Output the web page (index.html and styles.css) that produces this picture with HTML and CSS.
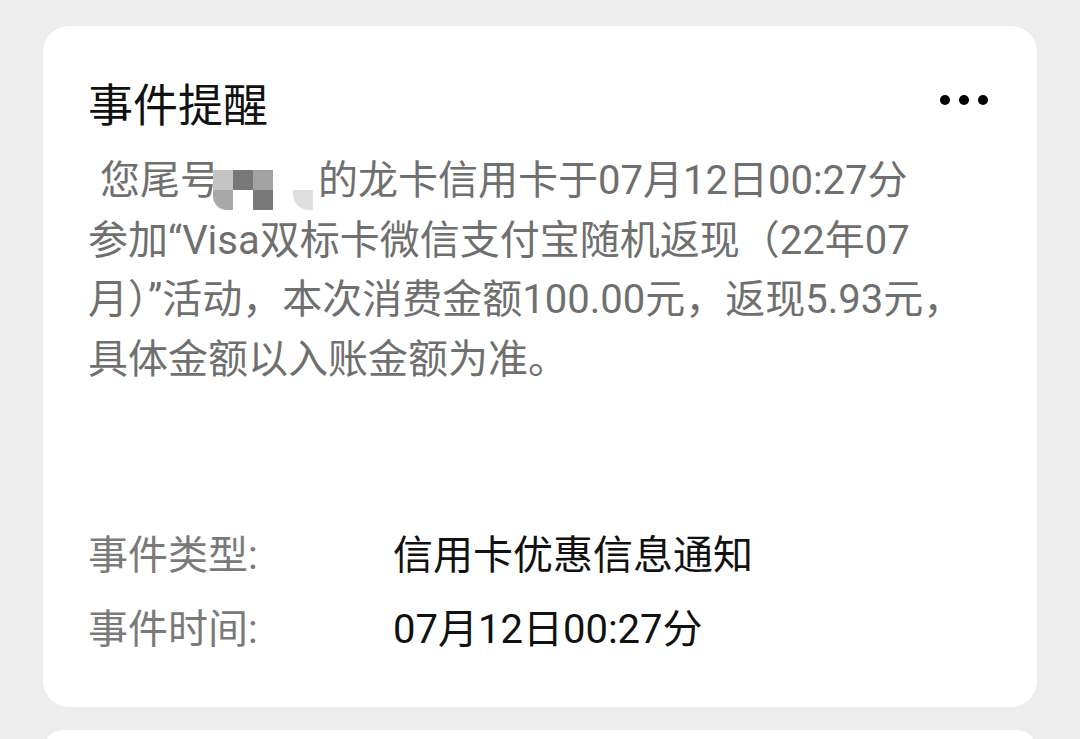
FILE: index.html
```html
<!DOCTYPE html>
<html lang="zh-CN">
<head>
<meta charset="utf-8">
<title>事件提醒</title>
<link rel="stylesheet" href="styles.css">
</head>
<body>
<div class="page">
  <section class="card">
    <header class="card-head">
      <h1 class="title">事件提醒</h1>
      <div class="more" aria-label="更多"><span></span><span></span><span></span></div>
    </header>
    <div class="message">
      <span class="line indent">您尾号<span class="mosaic"><i class="m1"></i><i class="m2"></i><i class="m3"></i><i class="m0"></i><i class="m0"></i><i class="m4"></i><i class="m0"></i><i class="m2"></i><i class="m0"></i><i class="m5"></i></span>的龙卡信用卡于07月12日00:27分</span>
      <span class="line">参加“Visa双标卡微信支付宝随机返现（22年07</span>
      <span class="line">月）”活动，本次消费金额100.00元，返现5.93元，</span>
      <span class="line">具体金额以入账金额为准。</span>
    </div>
    <dl class="details">
      <dt>事件类型:</dt><dd>信用卡优惠信息通知</dd>
      <dt>事件时间:</dt><dd>07月12日00:27分</dd>
    </dl>
  </section>
  <section class="card card-next"></section>
</div>
</body>
</html>
```
FILE: styles.css
```css
* { box-sizing: border-box; }
html, body {
  margin: 0;
  padding: 0;
  background: #ededed;
  overflow: hidden;
}
body {
  font-family: Roboto, "Noto Sans CJK SC", sans-serif;
  width: 1080px;
  height: 739px;
}
.page {
  padding: 26px 43px 0 43px;
  display: flex;
  flex-direction: column;
  gap: 23px;
}
.card {
  background: #ffffff;
  border-radius: 26px;
  padding: 47px 45px 44px 45px;
}
.card-next {
  height: 40px;
  padding: 0;
}
.card-head {
  display: flex;
  align-items: center;
  justify-content: space-between;
  height: 60px;
}
.title {
  margin: 0;
  font-family: "Noto Sans CJK SC", sans-serif;
  font-weight: 400;
  font-size: 45px;
  line-height: 60px;
  color: #111111;
}
.more {
  display: flex;
  gap: 9px;
  margin-right: 4px;
  margin-top: -6px;
}
.more span {
  width: 10px;
  height: 10px;
  border-radius: 50%;
  background: #000;
}
.message {
  margin: 20px 0 0 0;
  display: flex;
  flex-direction: column;
  font-size: 40px;
  color: #6f6f6f;
  white-space: nowrap;
}
.line {
  display: block;
  height: 59.5px;
  line-height: 56px;
}
.indent { padding-left: 12px; }
.mosaic {
  display: inline-grid;
  grid-template-columns: repeat(5, 20px);
  grid-template-rows: repeat(2, 20px);
  vertical-align: text-bottom;
  margin: 0 5px -6px -7px;
}
.mosaic i { display: block; }
.mosaic .m0 { background: #ffffff; }
.mosaic .m1 { background: #c4c4c4; }
.mosaic .m2 { background: #787878; }
.mosaic .m3 { background: #a2a2a2; }
.mosaic .m4 { background: #a8a8a8; border-bottom-left-radius: 14px; }
.mosaic .m5 { background: #dedede; border-bottom-left-radius: 16px; }
.details {
  margin: 124px 0 0 0;
  display: grid;
  grid-template-columns: 305px 1fr;
  grid-auto-rows: 74px;
  align-items: center;
  font-size: 40px;
}
.details dt {
  color: #7a7a7a;
  margin: 0;
}
.details dd {
  color: #111111;
  margin: 0;
}
```
